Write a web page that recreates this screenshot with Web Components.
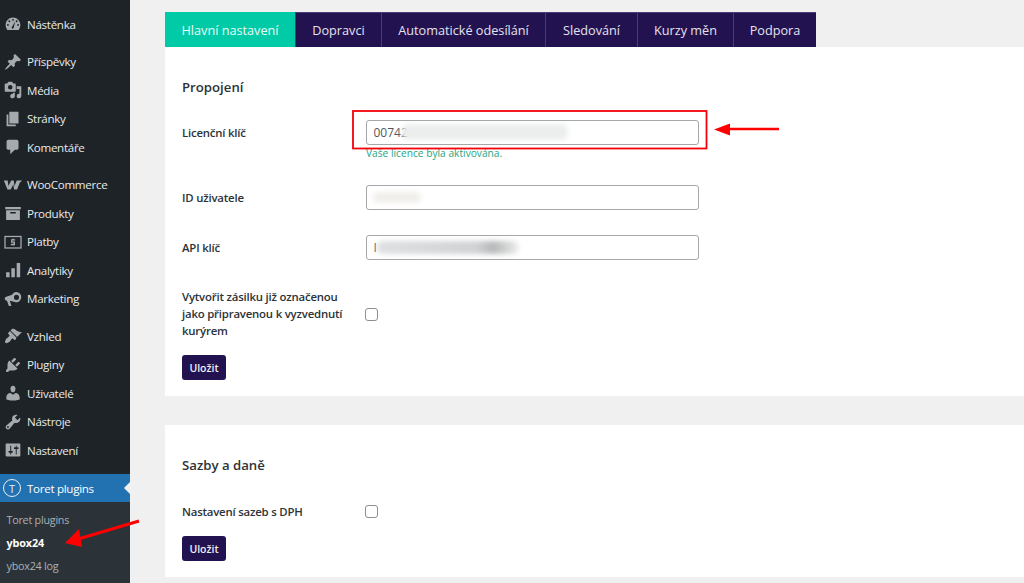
<!DOCTYPE html>
<html lang="cs"><head><meta charset="utf-8"><title>ybox24</title>
<style>
html,body{margin:0;padding:0;height:583px;overflow:hidden;background:#f0f0f1;font-family:"Open Sans","Noto Sans",sans-serif}
app-shell{position:relative}
</style></head><body>
<app-shell>
  <wp-sidebar slot="side">
    <menu-item icon="dashboard">Nástěnka</menu-item>
    <menu-sep></menu-sep>
    <menu-item icon="post">Příspěvky</menu-item>
    <menu-item icon="media">Média</menu-item>
    <menu-item icon="page">Stránky</menu-item>
    <menu-item icon="comment">Komentáře</menu-item>
    <menu-sep></menu-sep>
    <menu-item icon="woo">WooCommerce</menu-item>
    <menu-item icon="box">Produkty</menu-item>
    <menu-item icon="pay">Platby</menu-item>
    <menu-item icon="bars">Analytiky</menu-item>
    <menu-item icon="mega">Marketing</menu-item>
    <menu-sep></menu-sep>
    <menu-item icon="brush">Vzhled</menu-item>
    <menu-item icon="plug">Pluginy</menu-item>
    <menu-item icon="user">Uživatelé</menu-item>
    <menu-item icon="tool">Nástroje</menu-item>
    <menu-item icon="set">Nastavení</menu-item>
    <menu-sep></menu-sep>
    <toret-head>Toret plugins</toret-head>
    <sub-menu>
      <sub-item>Toret plugins</sub-item>
      <sub-item active>ybox24</sub-item>
      <sub-item>ybox24 log</sub-item>
    </sub-menu>
  </wp-sidebar>
  <settings-page slot="main">
    <tab-bar>
      <tab-btn active w="130">Hlavní nastavení</tab-btn>
      <tab-btn w="86">Dopravci</tab-btn>
      <tab-btn w="164">Automatické odesílání</tab-btn>
      <tab-btn w="92">Sledování</tab-btn>
      <tab-btn w="96">Kurzy měn</tab-btn>
      <tab-btn w="83">Podpora</tab-btn>
    </tab-bar>
    <settings-card heading="Propojení">
      <form-row label="Licenční klíč" gap="21">
        <text-field value="00742" mask="1"></text-field>
        <status-note>Vaše licence byla aktivována.</status-note>
      </form-row>
      <form-row label="ID uživatele" gap="23"><text-field mask="2"></text-field></form-row>
      <form-row label="API klíč" gap="25"><text-field value="I" mask="3"></text-field></form-row>
      <form-row label="Vytvořit zásilku již označenou jako připravenou k vyzvednutí kurýrem" gap="28" center><check-box></check-box></form-row>
      <save-btn gap="16">Uložit</save-btn>
    </settings-card>
    <card-gap></card-gap>
    <settings-card heading="Sazby a daně">
      <form-row label="Nastavení sazeb s DPH" gap="21.500" center tall><check-box></check-box></form-row>
      <save-btn gap="12.500">Uložit</save-btn>
    </settings-card>
  </settings-page>
</app-shell>
<script>
const ICONS={
dashboard:'<path fill-rule="evenodd" d="M3.800 16.500h12.400C17.300 15 18 13.200 18 11.200 18 6.700 14.400 3 10 3S2 6.700 2 11.200c0 2 .7 3.800 1.800 5.300zM10 4.500a1 1 0 1 1 0 2 1 1 0 0 1 0-2zM6 6a1 1 0 1 1 0 2 1 1 0 0 1 0-2zm8 0a1 1 0 1 1 0 2 1 1 0 0 1 0-2zM4.500 10a1 1 0 1 1 0 2 1 1 0 0 1 0-2zm11 0a1 1 0 1 1 0 2 1 1 0 0 1 0-2zM9 15a1.500 1.500 0 0 1 .2-2.300L12.500 7l-1.600 6.300A1.500 1.500 0 0 1 9 15z"/>',
post:'<path d="M10.440 3.020l1.820-1.820 6.360 6.350-1.830 1.820c-1.050-.68-2.480-.57-3.410.36l-.75.75c-.92.93-1.040 2.350-.35 3.410l-1.830 1.820-2.410-2.410-2.800 2.790c-.42.42-3.380 2.710-3.800 2.290s1.860-3.390 2.280-3.810l2.790-2.790L4.100 9.360l1.830-1.820c1.050.69 2.480.57 3.410-.36l.75-.75c.93-.92 1.040-2.350.35-3.410z"/>',
media:'<path fill-rule="evenodd" d="M13 11V4c0-.55-.45-1-1-1h-1.670L9 1H5L3.670 3H2c-.55 0-1 .45-1 1v7c0 .55.45 1 1 1h10c.55 0 1-.45 1-1zM7 4.500a2.500 2.500 0 1 1 0 5 2.500 2.500 0 0 1 0-5zM14 6h5v10.500a2.500 2.500 0 1 1-2-2.450V9h-3V6zm-4 8.050V13h2v3.500a2.500 2.500 0 1 1-2-2.450z"/>',
page:'<path d="M6 15V2h10v13H6zm-1 1h8v2H3V5h2v11z"/>',
comment:'<path d="M5 2h9c1.100 0 2 .9 2 2v7c0 1.100-.9 2-2 2h-2l-5 5v-5H5c-1.100 0-2-.9-2-2V4c0-1.100.9-2 2-2z"/>',
woo:'<path d="M0 5h4.200l.9 6.200L8 5h2.800l.9 6.200L14 5h6l-2.700 2.500-2.900 7.500h-3.200l-.9-5.500L7.500 15H4z"/>',
box:'<path fill-rule="evenodd" d="M1.500 3.500h17v2.500h-17zM2.500 7h15v10.500h-15zM7 9v1.500h6V9z"/>',
pay:'<rect x="1.300" y="4" width="17.400" height="12.500" fill="none" stroke="currentColor" stroke-width="1.400"/><path fill="none" stroke="currentColor" stroke-width="1.500" d="M12.400 7.700H8.700v2.500h2.700v2.500H7.600M10 6.500v1.200M10 12.700v1.200"/>',
bars:'<path d="M2.500 12.500h3.800V18H2.500zM8.200 8h3.800v10H8.200zM14 2.500h3.800V18H14z"/>',
mega:'<path fill-rule="evenodd" d="M13.500 2.500a5.500 5.500 0 1 1-1.500 10.800L6.500 12l1.800 5.500H5.500L3.500 12c-1.500-.3-2.500-1.200-2.500-2.500S2 7.500 3.500 7.200L9 5.500c1-1.800 2.600-3 4.500-3zm.3 3a2.500 2.500 0 1 0 0 5.500 2.500 2.500 0 0 0 0-5.500z"/>',
brush:'<path d="M14.480 11.060L7.410 3.990l1.500-1.500c.5-.56 2.300-.47 3.510.32 1.210.8 1.430 1.280 2.910 2.100 1.180.64 2.450 1.260 4.450.85zm-.71.71L6.700 4.700 4.930 6.470c-.39.39-.39 1.020 0 1.410l1.060 1.060c.39.39.39 1.030 0 1.420-.6.6-1.430 1.110-2.210 1.690-.35.26-.7.53-1.010.84-1.340 1.830-1.870 3.710-1.070 4.510.8.8 2.680.27 4.510-1.070.31-.31.58-.66.85-1.010.57-.78 1.080-1.610 1.690-2.210.39-.39 1.020-.39 1.410 0l1.060 1.060c.39.39 1.020.39 1.410 0z"/>',
plug:'<path d="M13.110 4.360L9.870 7.600 8 5.730l3.240-3.240c.35-.34 1.050-.2 1.560.32.52.51.66 1.210.31 1.550zm-8 1.770l.91-1.120 9.010 9.010-1.190.84c-.71.71-2.630 1.160-3.820 1.160H6.140L4.900 17.260c-.59.59-1.540.59-2.120 0-.59-.58-.59-1.530 0-2.120l1.240-1.240v-3.880c0-1.130.4-3.060 1.090-3.890zm7.260 3.970l3.240-3.240c.34-.35 1.040-.21 1.550.31.52.51.66 1.210.31 1.550l-3.240 3.250z"/>',
user:'<path d="M10 9.250c-2.270 0-2.730-3.440-2.730-3.440C7 4.020 7.820 2 9.970 2c2.160 0 2.980 2.020 2.710 3.810 0 0-.41 3.440-2.680 3.440zm0 2.570L12.720 10c2.390 0 4.520 2.330 4.520 4.530v2.490s-3.650 1.130-7.240 1.130c-3.650 0-7.240-1.130-7.240-1.130v-2.490c0-2.250 1.940-4.480 4.470-4.480z"/>',
tool:'<path fill-rule="evenodd" d="M16.680 9.770c-1.340 1.340-3.300 1.670-4.950.99l-5.410 6.520c-.99.99-2.590.99-3.580 0s-.99-2.590 0-3.580l6.520-5.420c-.68-1.650-.35-3.610.99-4.950 1.280-1.280 3.120-1.620 4.720-1.060l-2.890 2.890 2.820 2.820 2.860-2.870c.53 1.580.18 3.390-1.080 4.660zM3.810 16.210c.4.39 1.040.39 1.430 0 .4-.4.4-1.040 0-1.430-.39-.4-1.030-.4-1.430 0-.39.39-.39 1.030 0 1.430z"/>',
set:'<path fill-rule="evenodd" d="M18 16V4c0-.55-.45-1-1-1H3c-.55 0-1 .45-1 1v12c0 .55.45 1 1 1h14c.55 0 1-.45 1-1zM8 11h1c.55 0 1 .45 1 1s-.45 1-1 1H8v1.500c0 .28-.22.5-.5.5s-.5-.22-.5-.5V13H6c-.55 0-1-.45-1-1s.45-1 1-1h1V5.500c0-.28.22-.5.5-.5s.5.22.5.5V11zm5-2h-1c-.55 0-1-.45-1-1s.45-1 1-1h1V5.500c0-.28.22-.5.5-.5s.5.22.5.5V7h1c.55 0 1 .45 1 1s-.45 1-1 1h-1v5.500c0 .28-.22.5-.5.5s-.5-.22-.5-.5V9z"/>'
};
function def(name,css,html,extra){
  customElements.define(name,class extends HTMLElement{
    constructor(){super();this.attachShadow({mode:'open'});}
    connectedCallback(){
      this.shadowRoot.innerHTML='<style>'+css+'</style>'+(typeof html==='function'?html(this):html);
      if(extra)extra(this);
    }
  });
}
def('app-shell',':host{display:flex;width:1024px;height:583px;position:relative;overflow:hidden}.over{position:absolute;left:0;top:0;pointer-events:none}',
`<slot name="side"></slot><slot name="main"></slot>
<svg class="over" width="1024" height="583" viewBox="0 0 1024 583">
<rect x="353" y="111" width="353.500" height="37.500" fill="none" stroke="#f4000a" stroke-width="1.800"/>
<path d="M729 129h50" stroke="#f00" stroke-width="2.400"/><path d="M714 129.500l16-6v12z" fill="#f00"/>
<path d="M139 521L80 538.500" stroke="#f00" stroke-width="3"/><path d="M65 543l14-14 3 18z" fill="#f00"/>
</svg>`);
def('wp-sidebar',':host{display:flex;flex-direction:column;width:130px;height:583px;flex:none;background:#1d2327;padding-top:10px;box-sizing:border-box;color:#f0f0f1;font-size:12px}','<slot></slot>');
def('menu-sep',':host{display:block;height:9.000px}:host(:nth-last-child(3)){height:9.500px}','');
def('menu-item',':host{display:flex;align-items:center;height:28.500px;color:#e8eaeb;font-size:11.600px;letter-spacing:-.3px}svg{width:20px;height:20px;margin-left:2.500px;margin-right:4.500px;fill:#a7aaad;color:#a7aaad;flex:none;transform:scale(.92)}',
 h=>`<svg viewBox="0 0 20 20">${ICONS[h.getAttribute('icon')]||''}</svg><slot></slot>`);
def('toret-head',':host{display:flex;align-items:center;height:28px;background:#2271b1;color:#fff;font-size:11.600px;letter-spacing:-.3px;position:relative}.t{width:18px;height:18px;box-sizing:border-box;border:1.500px solid #e8f0f6;border-radius:50%;margin:0 6px 0 3px;display:flex;align-items:center;justify-content:center;font-size:11px;line-height:1;color:#e8f0f6}.a{position:absolute;right:0;top:8px;border:6px solid transparent;border-right-color:#f0f0f1;border-left:0}',
 '<span class="t">T</span><slot></slot><span class="a"></span>');
def('sub-menu',':host{display:flex;flex-direction:column;flex:1;background:#2c3338;padding-top:5.500px}','<slot></slot>');
def('sub-item',':host{display:block;height:23px;line-height:23px;padding-left:6.500px;font-size:10.800px;letter-spacing:-.25px;color:#a9b0b5}:host([active]){color:#fff;font-weight:700;letter-spacing:-.1px}','<slot></slot>');
def('settings-page',':host{display:flex;flex-direction:column;flex:1;padding:12px 0 0 35px;min-width:0}','<slot></slot>');
def('tab-bar',':host{display:flex;height:35px}','<slot></slot>');
def('tab-btn',':host{display:flex;align-items:center;justify-content:center;box-sizing:border-box;background:#231250;color:#e4e2ee;font-size:12.700px;border-left:1px solid #493c76;border-top:1px solid #493c76}:host([active]){background:#00cba6;color:#eafaf6;border:0}','<slot></slot>',h=>{h.style.width=h.getAttribute('w')+'px'});
def('settings-card',':host{display:block;background:#fff;padding:28px 0 16px 17px;color:#2c3338}h2{margin:0;font-size:13.200px;font-weight:600;line-height:24px;color:#2c3338}',
 h=>`<h2>${h.getAttribute('heading')}</h2><slot></slot>`);
def('card-gap',':host{display:block;height:29px}','');
def('form-row',':host{display:grid;grid-template-columns:170px 333px;column-gap:14px;font-size:11.400px;letter-spacing:-.2px}.l{font-weight:600;line-height:17px;color:#2c3338;padding-top:4px}.f{display:flex;flex-direction:column;letter-spacing:0}:host([center]) .l{padding-top:0}:host([center]){align-items:center}:host([tall]){min-height:25px}',
 h=>`<div class="l">${h.getAttribute('label')}</div><div class="f"><slot></slot></div>`,h=>{h.style.marginTop=h.getAttribute('gap')+'px'});
def('text-field',':host{display:block;position:relative;height:25px;box-sizing:border-box;border:1px solid #a5a7ab;border-radius:3px;background:#fff;overflow:hidden}.v{position:absolute;left:6.500px;top:0;line-height:23px;font-size:12px;color:#50575e}.m{position:absolute;filter:blur(2.500px);border-radius:6px}.m1{left:35px;top:3px;width:166px;height:16px;background:#eceeee}.m2{left:6px;top:6px;width:48px;height:11px;background:#f1efec}.m3{left:10px;top:5px;width:142px;height:13px;background:linear-gradient(90deg,#dfe0e1,#d0d2d3 70%,#b6b8b9 82%,#eeeeee)}',
 h=>`<span class="v">${h.getAttribute('value')||''}</span><span class="m m${h.getAttribute('mask')}"></span>`);
def('status-note',':host{display:block;font-size:10.200px;line-height:17px;color:#1fa57f}','<slot></slot>');
def('check-box',':host{display:block;width:13px;height:13px;box-sizing:border-box;border:1px solid #8c8f94;border-radius:3px;background:#fff;margin:1px 0 0 -1px}','');
def('save-btn',':host{display:flex;align-items:center;justify-content:center;width:44px;height:25px;background:#231250;border-radius:3px;color:#f0eff5;font-size:10.500px;font-weight:600}','<slot></slot>',h=>{h.style.marginTop=h.getAttribute('gap')+'px'});
</script>
</body></html>
